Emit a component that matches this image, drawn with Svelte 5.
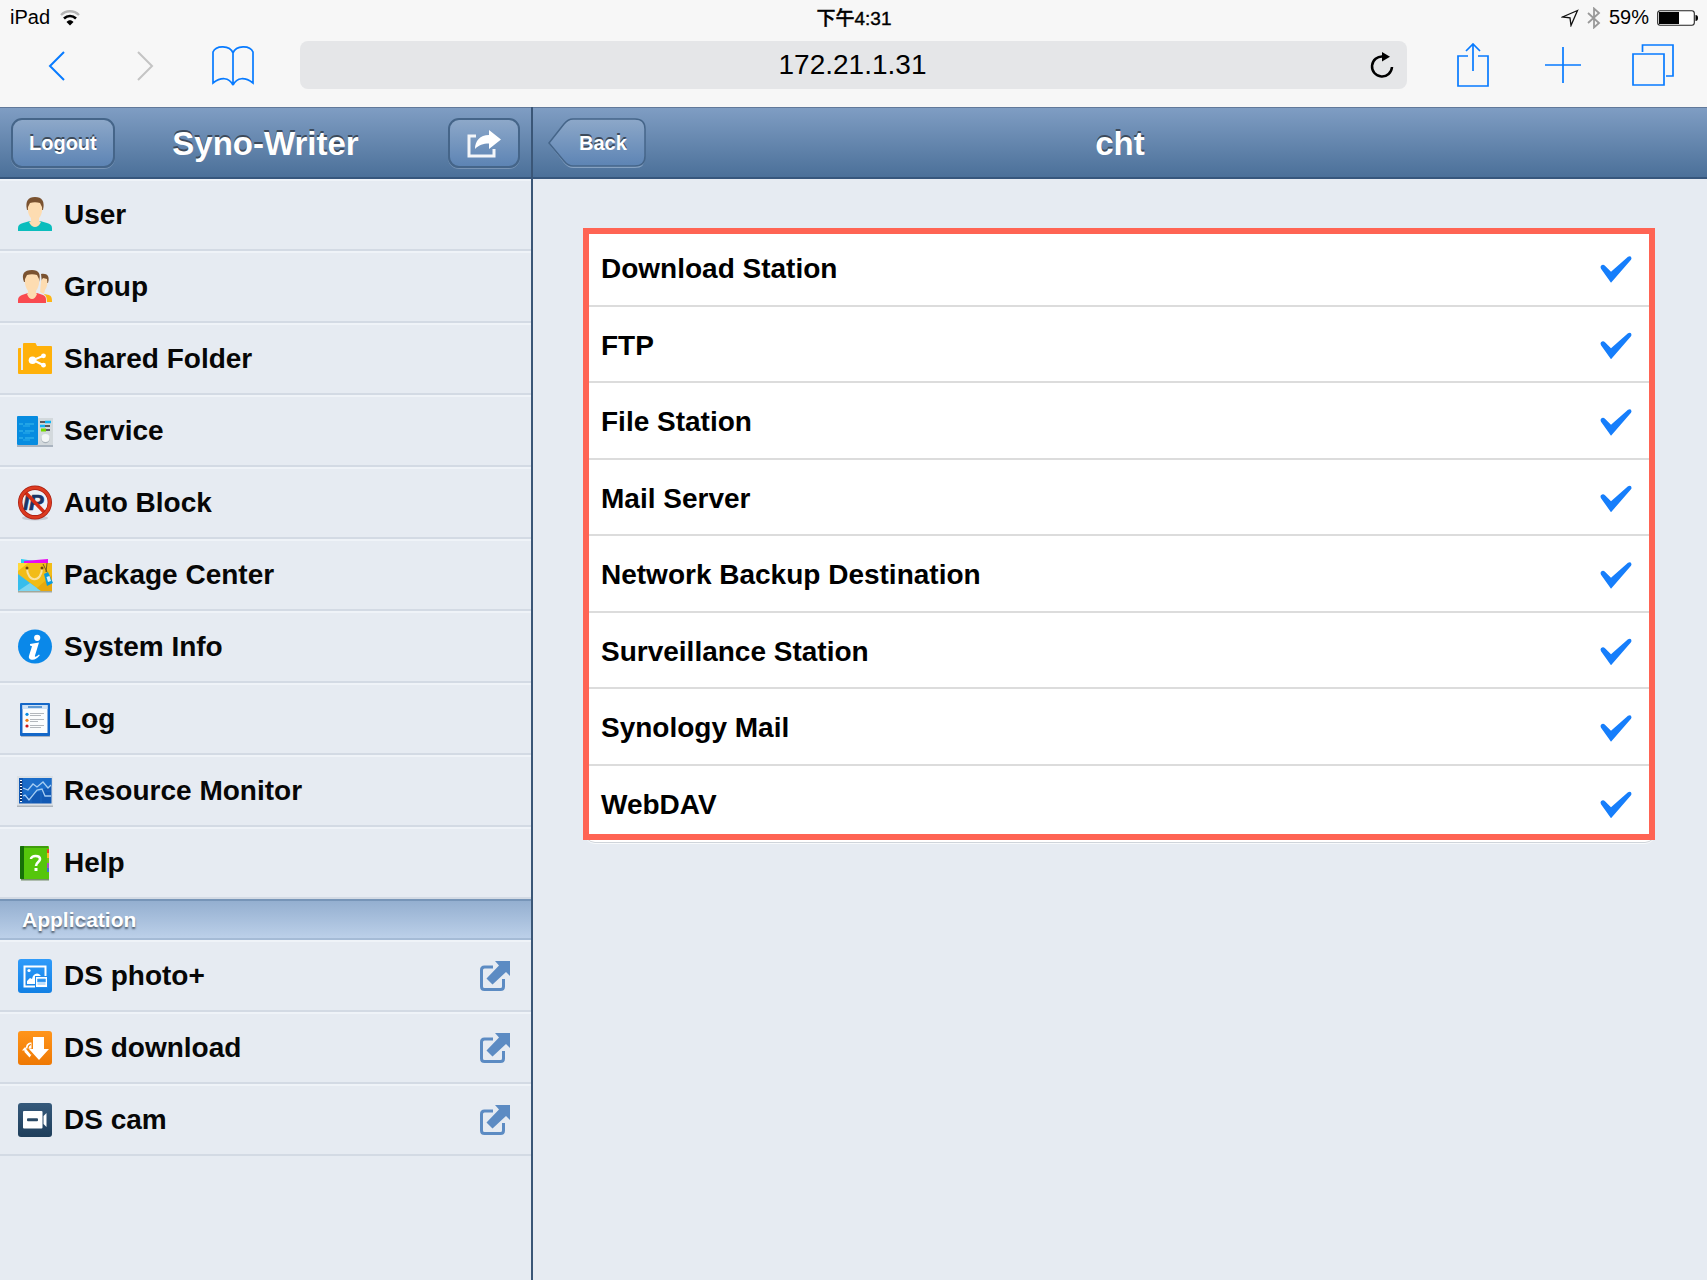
<script>
  const menu = [
    { id: 'user', label: 'User' },
    { id: 'group', label: 'Group' },
    { id: 'folder', label: 'Shared Folder' },
    { id: 'service', label: 'Service' },
    { id: 'block', label: 'Auto Block' },
    { id: 'package', label: 'Package Center' },
    { id: 'info', label: 'System Info' },
    { id: 'log', label: 'Log' },
    { id: 'resource', label: 'Resource Monitor' },
    { id: 'help', label: 'Help' },
  ];

  const apps = [
    { id: 'photo', label: 'DS photo+' },
    { id: 'download', label: 'DS download' },
    { id: 'cam', label: 'DS cam' },
  ];

  let services = $state([
    { label: 'Download Station', on: true },
    { label: 'FTP', on: true },
    { label: 'File Station', on: true },
    { label: 'Mail Server', on: true },
    { label: 'Network Backup Destination', on: true },
    { label: 'Surveillance Station', on: true },
    { label: 'Synology Mail', on: true },
    { label: 'WebDAV', on: true },
  ]);
</script>

{#snippet tile(id, top, bottom)}
  <defs>
    <linearGradient id="tile-{id}" x1="0" y1="0" x2="0" y2="1">
      <stop offset="0" stop-color={top} />
      <stop offset="1" stop-color={bottom} />
    </linearGradient>
  </defs>
  <rect x="1" y="1" width="34" height="34" rx="3" fill="url(#tile-{id})" />
{/snippet}

{#snippet icon(id)}
  <svg class="icon" viewBox="0 0 36 36" aria-hidden="true">
    {#if id === 'user'}
      <path d="M1 34v-3c0-3 2-4 5-5l7-2h10l7 2c3 1 5 2 5 5v3z" fill="#0bbdbd" />
      <path d="M14 19h8v5l2 1c-1 3-4 5-6 5s-5-2-6-5l2-1z" fill="#fddcb1" />
      <path d="M10 13C8 4 11 0 18 0s10 4 8 13z" fill="#7a5230" />
      <path d="M11 10l2-4c3-1 7-1 10 0l2 4c1 7-3 13-7 13s-8-6-7-13z" fill="#fddcb1" />
    {:else if id === 'group'}
      <path d="M27 25l5 1c2 1 3 2 3 7h-6z" fill="#fdb515" />
      <path d="M24 5c6-1 9 2 7 9h-6z" fill="#7a5230" />
      <path d="M24 12l2-3 4 1c1 5 0 8-2 11l-1 4-4-1z" fill="#fddcb1" />
      <path d="M0 34v-3c0-3 2-5 5-6l6-2 1-4C5 12 5 1 15 1s10 11 7 18l1 4 3 2c3 1 4 3 4 9z" fill="#e6ebf2" />
      <path d="M1 34v-3c0-3 2-4 4-5l6-2h9l6 2c2 1 3 2 3 5v3z" fill="#f94a50" />
      <path d="M11 19h8v5l1 1c-1 3-3 5-5 5s-4-2-5-5l1-1z" fill="#fddcb1" />
      <path d="M7 13C4 5 7 1 15 1c7 0 9 4 7 12z" fill="#7a5230" />
      <path d="M8 10l2-4c3-1 7-1 10 0l2 4c1 7-3 14-7 14S7 17 8 10z" fill="#fddcb1" />
    {:else if id === 'folder'}
      <path d="M2 7h2v22h2V3q0-1 1-1h11q1 0 1 1l1 2h14q1 0 1 1v26q0 1-1 1H2q-1 0-1-1V8q0-1 1-1z" fill="#ffb10a" />
      <path d="M26 15l-10 4 10 5" fill="none" stroke="#fff" stroke-width="2" />
      <circle cx="15.500" cy="19.300" r="3.800" fill="#fff" />
      <circle cx="26.500" cy="14.800" r="2.400" fill="#fff" />
      <circle cx="26.500" cy="24.200" r="2.400" fill="#fff" />
    {:else if id === 'service'}
      <path d="M0 32h36v2H0z" fill="#aab4c0" />
      <rect x="20" y="5" width="16" height="27" fill="#d3d9dd" />
      <rect y="3" width="21" height="29" rx="1" fill="#078ce0" />
      <path d="M2 11h4M8 11h9M2 18h4M8 18h9M2 25h4M8 25h9" stroke="#3fbcec" stroke-width="1.200" />
      <path d="M6 13h7M6 20h7M6 27h7" stroke="#2caeea" />
      <path d="M23 9h6M28 13h5M28 17h5" stroke="#565b60" stroke-width="2" />
      <path d="M28 9h6M23 13h5" stroke="#10b5f5" stroke-width="2.500" />
      <path d="M24 17h5" stroke="#76d900" stroke-width="3" />
      <circle cx="28.500" cy="26" r="4.200" fill="#a9b2ba" />
      <circle cx="28.500" cy="25" r="4" fill="#f4f6f7" />
    {:else if id === 'block'}
      <ellipse cx="18" cy="33" rx="13" ry="2.500" fill="#c5cad3" />
      <circle cx="18" cy="17.500" r="15" fill="#eef0f6" />
      <text class="ip" x="6" y="25">IP</text>
      <path d="M7 6l22 23" stroke="#d52c14" stroke-width="3.500" />
      <circle cx="18" cy="17.500" r="14.800" fill="none" stroke="#a61d10" stroke-width="4.400" />
      <circle cx="18" cy="17.500" r="14.800" fill="none" stroke="#dc3a20" stroke-width="3" />
    {:else if id === 'package'}
      <path d="M4 2l14 2v7H4z" fill="#27cdf5" />
      <path d="M7 4l24-2v9H7z" fill="#e90af0" />
      <rect x="1" y="33" width="34" height="2.500" fill="#a3a89b" />
      <path d="M1 6h34v28H1z" fill="#f2bc17" />
      <path d="M1 6h10L1 14z" fill="#ffd93b" />
      <path d="M1 17l23 17H1z" fill="#36bdec" />
      <path d="M1 34l12-8 11 8z" fill="#7cd6f1" />
      <path d="M20 31L35 18v16H24z" fill="#e8a80e" />
      <path d="M10 11c0 15 15 15 15 0" fill="none" stroke="#f9e2a0" stroke-width="2" />
      <circle cx="10" cy="11" r="1.500" fill="#6b4706" />
      <circle cx="25" cy="11" r="1.500" fill="#6b4706" />
      <path d="M26 7l4 8M30 6l-1 9" fill="none" stroke="#6d5a22" />
      <path d="M27 17l4-2 5 11-6 3z" fill="#0a9bdc" />
      <path d="M29.500 20l3-1 1.500 5-3 1z" fill="#d9f2fc" />
    {:else if id === 'info'}
      <circle cx="18" cy="17.500" r="17" fill="#0a88e9" />
      <circle cx="20.200" cy="8.800" r="3.100" fill="#fff" />
      <path d="M13 15l9-1.500-4 13c-.500 2 1 1.500 4-1l.800.800c-3 3.500-5 4.500-7 4.500-3 0-4.500-1.500-3.800-4l3-9.500-2-.800z" fill="#fff" />
    {:else if id === 'log'}
      <rect x="4" y="33" width="29" height="3" fill="#a9b3c2" />
      <rect x="3" y="2" width="30" height="33" rx="1" fill="#1467c8" />
      <rect x="5.500" y="4" width="25" height="28" fill="#fbfcfd" />
      <path d="M5.500 4h25v4h-25z" fill="#cfe2f6" />
      <path d="M11 6h14" stroke="#3b82c9" stroke-width="1.500" />
      <path d="M13 12.500h14M13 14.500h11M13 18.500h14M13 20.500h8M13 24.500h14M13 26.500h11" stroke="#b3b7bc" />
      <circle cx="10" cy="13.300" r="1.600" fill="#0b8de3" />
      <circle cx="10" cy="19.300" r="1.600" fill="#f27c12" />
      <circle cx="10" cy="25" r="1.600" fill="#cf1515" />
    {:else if id === 'resource'}
      <rect y="31" width="36" height="3" fill="#aeb5bd" />
      <rect y="3" width="36" height="29.500" fill="#dce1e6" />
      <rect x="2" y="5" width="32.500" height="25.500" fill="#1259b4" />
      <path d="M6 5h28.500v8L6 25z" fill="#1a6cc9" />
      <path d="M2 18h32M14 5v25M24 5v25" stroke="#2b75c9" stroke-width=".500" />
      <path d="M4 7v22" stroke="#0b2e66" stroke-width="2" />
      <path d="M4 7v22" stroke="#fff" stroke-width="2" stroke-dasharray="1 2" />
      <path d="M6 15l5 2 5-6 4 3 6-5 5 6 3-3M6 23l2-1 4 5 8-10 5-1 3 7h6" fill="none" stroke="#a6cdf2" stroke-width="1.300" />
    {:else if id === 'help'}
      <rect x="4" y="33" width="28" height="2.500" fill="#76906a" />
      <path d="M27 2h5v7h-5z" fill="#e84525" />
      <path d="M27 8h5v5h-5z" fill="#f7bf23" />
      <path d="M27 13h5v6h-5z" fill="#78c514" />
      <path d="M27 18h5v5h-5z" fill="#a354be" />
      <path d="M27 23h5v5h-5z" fill="#4175d0" />
      <path d="M4 1h27q1 0 1 1v2h-2v23h2v6q0 1-1 1H4q-1 0-1-1V2q0-1 1-1z" fill="#55c60c" />
      <path d="M7 1h24v2H7z" fill="#3f9d0c" />
      <path d="M4 1h3v33H4q-1 0-1-1V2q0-1 1-1z" fill="#167008" />
      <path d="M14 14c0-4 9-4 9 0 0 3-4 3-4 7" fill="none" stroke="#fff" stroke-width="2.600" />
      <rect x="17.500" y="23" width="3" height="3" fill="#fff" />
    {:else if id === 'photo'}
      {@render tile(id, '#2f9bfa', '#1280e4')}
      <rect x="7.500" y="8.500" width="21" height="20" fill="none" stroke="#fff" stroke-width="2" />
      <circle cx="12" cy="12.500" r="1.600" fill="#fff" />
      <path d="M10 26v-3l3-3 2 1c1-6 7-8 10-1v6z" fill="#fff" />
      <path d="M18 18h13v12H18z" fill="#1f8bee" />
      <path d="M19 19h11v10H19z" fill="#fff" />
      <path d="M20.500 21h8v3h-8zM20.500 26h8" fill="#238ff0" stroke="#5aabf2" stroke-width=".800" />
    {:else if id === 'download'}
      {@render tile(id, '#ff951b', '#ee7803')}
      <path d="M16 7h11v12h5L22 30 12 19h4z" fill="#fff" />
      <path d="M14.500 12.500v6L10 19l4.500 5.500-2 3-5-5.500v-1.500H5l2.500-3H9c0-3 2-5 5.500-5z" fill="#fff" />
      <path d="M14 14.500c-2.500.500-3 2-3 4.500h-1l4.500 5.500" fill="none" stroke="#f78509" stroke-width="1.200" />
    {:else}
      {@render tile(id, '#35597b', '#1f3e5b')}
      <rect x="6" y="9" width="19.500" height="17.500" rx="1" fill="#fff" />
      <rect x="10" y="16.300" width="11" height="3" rx="1" fill="#2a4965" />
      <path d="M26.500 14l3-3v14l-3-3z" fill="#fff" />
    {/if}
  </svg>
{/snippet}

<div class="screen">
  <header class="browser">
    <div class="status">
      <div class="status-left">
        <span>iPad</span>
        <svg width="20" height="16" viewBox="0 0 20 16" aria-label="Wi-Fi">
          <path d="M1 5C6 0 14 0 19 5" fill="none" stroke="#b4b4b4" stroke-width="2.400" />
          <path d="M4 8.500c3.500-3.300 8.500-3.300 12 0" fill="none" stroke="#000" stroke-width="2.600" />
          <path d="M6.500 12c2-2.200 5-2.200 7 0L10 15.500z" />
        </svg>
      </div>
      <time>下午4:31</time>
      <div class="status-right">
        <svg width="18" height="18" viewBox="0 0 18 18" aria-hidden="true">
          <path d="M16.500 1.500L1.500 8l7.500.800 1 7.700z" fill="none" stroke="#111" stroke-width="1.300" />
        </svg>
        <svg width="14" height="22" viewBox="0 0 14 22" aria-hidden="true">
          <path d="M1 6l11 10-5 4.500V1.500L12 6 1 16" fill="none" stroke="#999" stroke-width="1.800" />
        </svg>
        <span>59%</span>
        <svg width="41" height="16" viewBox="0 0 41 16" aria-hidden="true">
          <rect x=".700" y=".700" width="36.600" height="14.600" rx="2.500" fill="#fff" stroke="#222" stroke-width="1.100" />
          <path d="M2 2h20v12H2z" />
          <path d="M38.500 5q2.500 0 2.500 3t-2.500 3z" />
        </svg>
      </div>
    </div>
    <div class="toolbar">
      <div class="tools left">
        <button aria-label="Previous page">
          <svg width="18" height="32" viewBox="0 0 18 32"><path d="M16 2L2 16l14 14" class="line" /></svg>
        </button>
        <button aria-label="Next page" disabled>
          <svg width="18" height="32" viewBox="0 0 18 32"><path d="M2 2l14 14L2 30" class="line off" /></svg>
        </button>
        <button aria-label="Bookmarks">
          <svg width="42" height="42" viewBox="0 0 42 42">
            <path d="M21 8v32c-4-8-12-8-20-2V7C4 0 18 0 21 8c3-8 17-8 20-1v31c-8-6-16-6-20 2" class="line thin" />
          </svg>
        </button>
      </div>
      <div class="address">
        <input type="text" aria-label="Address" value="172.21.1.31" readonly />
        <button aria-label="Reload">
          <svg width="24" height="28" viewBox="0 0 24 28">
            <path d="M13 5.500a10 10 0 1 0 9 10.500" fill="none" stroke="#000" stroke-width="2.500" />
            <path d="M12 1l8 4.800-8 4.800z" />
          </svg>
        </button>
      </div>
      <div class="tools right">
        <button aria-label="Share">
          <svg width="32" height="44" viewBox="0 0 32 44">
            <path d="M11 13H1v30h30V13H21M16 28V2M9 8l7-7 7 7" class="line thin" />
          </svg>
        </button>
        <button aria-label="New tab">
          <svg width="36" height="36" viewBox="0 0 36 36"><path d="M18 0v36M0 18h36" class="line thin" /></svg>
        </button>
        <button aria-label="All tabs">
          <svg width="42" height="42" viewBox="0 0 42 42">
            <path d="M1 10h31v31H1zM10.500 8V1H41v31h-7" class="line thin" />
          </svg>
        </button>
      </div>
    </div>
  </header>

  <div class="body">
    <aside>
      <div class="bar">
        <button class="pill">Logout</button>
        <h1>Syno-Writer</h1>
        <button class="pill share" aria-label="Share">
          <svg width="36" height="28" viewBox="0 0 36 28">
            <path d="M10 6H3v20h25v-7" fill="none" stroke="#f4f6f9" stroke-width="3" />
            <path d="M23 0l12 9.500L23 19v-5.500c-6 0-10 1.500-14 5.500 0-8 5-14 14-14z" fill="#fff" />
          </svg>
        </button>
      </div>
      <nav>
        {#each menu as item}
          <a class="row" href="#{item.id}">{@render icon(item.id)}<span>{item.label}</span></a>
        {/each}
        <h2>Application</h2>
        {#each apps as item}
          <a class="row" href="#{item.id}">
            {@render icon(item.id)}<span>{item.label}</span>
            <svg class="out" width="30" height="30" viewBox="0 0 30 30" aria-hidden="true">
              <path d="M13 6H4.500Q1.500 6 1.500 9v16.500q0 3 3 3h16q3 0 3-3V18" fill="none" stroke="#5c8bc3" stroke-width="3" />
              <path d="M15 0h15v15l-4-4-13.500 12.500L6.500 17.500 19 4.500z" fill="#5c8bc3" />
            </svg>
          </a>
        {/each}
      </nav>
    </aside>

    <main>
      <div class="bar">
        <button class="back">
          <svg width="98" height="50" viewBox="0 0 98 50" aria-hidden="true">
            <defs>
              <linearGradient id="back-fill" x1="0" y1="0" x2="0" y2="1">
                <stop offset="0" stop-color="#8da8c9" />
                <stop offset="1" stop-color="#5d84b4" />
              </linearGradient>
            </defs>
            <path d="M1 26L16 7q4-5 9-5h62q10 0 10 10v28q0 10-10 10H25q-5 0-9-5z" fill="#86a2c2" />
            <path d="M1 25L16 6q4-5 9-5h62q10 0 10 10v27q0 10-10 10H25q-5 0-9-5z" fill="url(#back-fill)" stroke="#456589" stroke-width="1.500" />
          </svg>
          <span>Back</span>
        </button>
        <h1>cht</h1>
      </div>
      <form>
        {#each services as service}
          <label>
            <span>{service.label}</span>
            <input type="checkbox" bind:checked={service.on} />
          </label>
        {/each}
      </form>
    </main>
  </div>
</div>

<style>
  :global(body) {
    background: #e6ebf2;
  }

  .screen {
    display: flex;
    flex-direction: column;
    min-height: 100vh;
    font-family: "Liberation Sans", "Noto Sans CJK TC", sans-serif;
    color: #070707;
  }

  button {
    border: 0;
    padding: 0;
    background: none;
    font: inherit;
    color: inherit;
  }

  svg {
    display: block;
    flex: none;
  }

  .browser {
    background: #f7f7f7;
    color: #000;
  }

  .status {
    display: grid;
    grid-template-columns: 1fr auto 1fr;
    align-items: center;
    height: 35px;
    padding: 0 9px 0 10px;
    font-size: 20px;
  }

  .status-left,
  .status-right {
    display: flex;
    align-items: center;
    gap: 10px;
  }

  .status-right {
    justify-content: flex-end;
    gap: 8px;
  }

  time {
    padding-bottom: 2px;
    font-size: 19px;
    font-weight: 500;
    -webkit-text-stroke: 0.4px #000;
  }

  .toolbar {
    display: flex;
    align-items: center;
    padding: 6px 8px 18px 14px;
  }

  .tools {
    display: flex;
  }

  .tools button {
    display: grid;
    place-items: center;
    box-sizing: border-box;
    width: 88px;
    height: 48px;
    padding: 2px 2px 0 0;
  }

  .tools.right button {
    width: 90px;
    padding-top: 0;
  }

  .line {
    fill: none;
    stroke: #087bff;
    stroke-width: 2;
  }

  .line.thin {
    stroke-width: 1.7;
  }

  .line.off {
    stroke: #c4c4c4;
  }

  .address {
    display: flex;
    align-items: center;
    flex: 1;
    height: 48px;
    margin: 0 22px;
    padding: 0 13px 0 35px;
    border-radius: 8px;
    background: #e5e6e8;
  }

  .address input {
    flex: 1;
    min-width: 0;
    border: 0;
    outline: 0;
    padding: 0;
    background: none;
    font: inherit;
    font-size: 28px;
    line-height: 32px;
    text-align: center;
  }

  .body {
    display: flex;
    flex: 1;
  }

  aside {
    width: 531px;
    flex: none;
    border-right: 2px solid #3a5677;
  }

  main {
    flex: 1;
    min-width: 0;
  }

  .bar {
    display: grid;
    grid-template-columns: 1fr auto 1fr;
    align-items: center;
    box-sizing: border-box;
    height: 72px;
    padding: 0 11px;
    border-top: 1px solid #61799a;
    border-bottom: 2px solid #36567c;
    background: linear-gradient(#7f9dc3, #4b7099);
    color: #fff;
    text-shadow: 0 -2px 0 #3c4a5b;
  }

  main .bar {
    padding: 0 15px;
  }

  h1 {
    margin: 0;
    padding-top: 2px;
    font-size: 33px;
    line-height: 40px;
  }

  .bar button {
    justify-self: start;
    font-size: 20px;
    font-weight: bold;
    text-shadow: inherit;
  }

  .pill {
    box-sizing: border-box;
    height: 50px;
    padding: 2px 16px 0;
    border: 2px solid #456589;
    border-radius: 11px;
    background: linear-gradient(#8da8c9, #5d84b4);
    box-shadow: 0 1px 0 #7894b5;
  }

  .bar .share {
    display: grid;
    place-items: center;
    justify-self: end;
    width: 72px;
    padding: 2px 0 0;
  }

  .back {
    display: grid;
    align-items: center;
  }

  .back > * {
    grid-area: 1 / 1;
  }

  .back span {
    padding: 2px 0 0 31px;
    text-align: left;
  }

  .row {
    display: flex;
    align-items: center;
    gap: 11px;
    box-sizing: border-box;
    height: 72px;
    padding: 0 21px 0 17px;
    border-top: 2px solid #eff3f8;
    border-bottom: 2px solid #d3dae4;
    color: inherit;
    font-size: 28px;
    font-weight: bold;
    line-height: 32px;
    text-decoration: none;
  }

  .row span {
    flex: 1;
  }

  .icon {
    width: 36px;
    height: 36px;
  }

  .ip {
    fill: #1b3566;
    stroke: #1b3566;
    stroke-width: 0.6px;
    font: italic bold 22px "Liberation Sans", sans-serif;
  }

  h2 {
    box-sizing: border-box;
    height: 41px;
    margin: 0;
    padding-left: 22px;
    border-top: 2px solid #7795b8;
    border-bottom: 2px solid #a5bbd6;
    background: linear-gradient(#94afd0, #bcd0e9);
    color: #fff;
    font-size: 21px;
    line-height: 38px;
    text-shadow: 0 2px 2px #4d5b6c;
  }

  form {
    position: relative;
    display: grid;
    grid-auto-rows: 1fr;
    min-height: 612px;
    margin: 51px 52px;
    border-radius: 10px;
    background: #fff;
    box-shadow: 0 1px 0 #cfd4da, 0 2px 0 #f8fafc;
  }

  /* Highlight frame laid over the list */
  form::after {
    content: "";
    position: absolute;
    inset: -2px 0 2px -2px;
    border: 6px solid #ff6454;
    pointer-events: none;
  }

  label {
    display: flex;
    align-items: center;
    justify-content: space-between;
    padding: 4px 23px 0 16px;
    border-bottom: 2px solid #dcdcdc;
    color: #000;
    font-size: 28px;
    font-weight: bold;
    line-height: 32px;
  }

  label:last-child {
    border-bottom-color: transparent;
  }

  label input {
    appearance: none;
    width: 32px;
    height: 27px;
    margin: 0;
  }

  label input:checked {
    background: #167efb;
    clip-path: path("M1 10Q3 8 5 10L11 16 28 1Q30 0 31 1Q32 3 31 4L11 27 1 13Q0 11 1 10Z");
  }
</style>
